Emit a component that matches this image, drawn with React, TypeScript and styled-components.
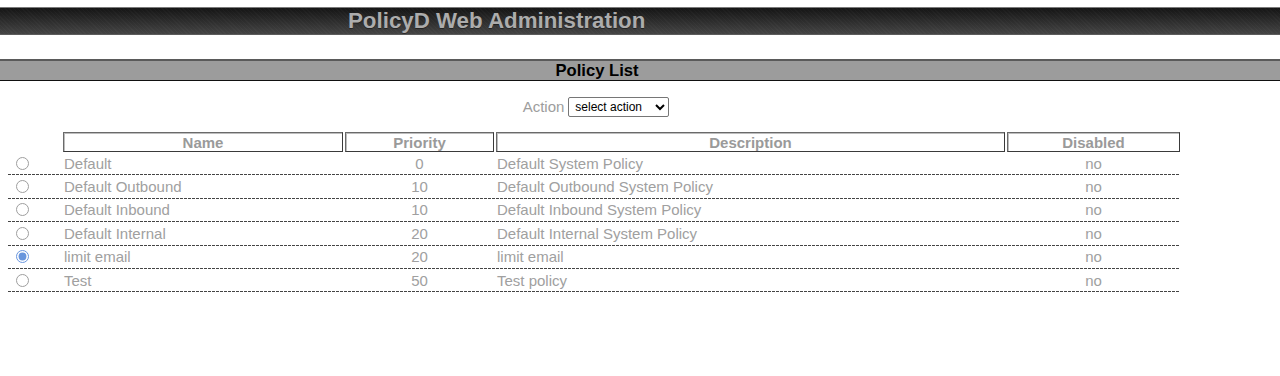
import * as React from "react";
import styled, { createGlobalStyle } from "styled-components";

const GlobalStyle = createGlobalStyle`
  html, body {
    margin: 0;
    padding: 0;
    background: #ffffff;
  }
  body {
    padding-top: 7px;
    font-family: "Liberation Sans", Arial, sans-serif;
    font-size: 15px;
    color: #999;
  }
`;

const TopBar = styled.div`
  height: 26px;
  border-top: 1px solid #7a7a7a;
  border-bottom: 1px solid #5c5c5c;
  background:
    repeating-linear-gradient(45deg, rgba(255, 255, 255, 0.025) 0 1px, transparent 1px 3px),
    linear-gradient(to bottom, #151515 0%, #2a2a2a 45%, #444 100%);
  display: flex;
  align-items: center;
  padding-left: 348px;
`;

const SiteTitle = styled.h1`
  margin: 0;
  font-size: 22.3px;
  font-weight: bold;
  color: #acacac;
  text-shadow: 0 1px 0 rgba(0, 0, 0, 0.4);
`;

const SectionBar = styled.div`
  margin-top: 24px;
  height: 19px;
  border-top: 2px solid #5a5a5a;
  border-bottom: 1px solid #111;
  background: #9c9c9c;
  display: flex;
  align-items: center;
  justify-content: center;
  padding-right: 86px;
`;

const SectionTitle = styled.h2`
  margin: 0;
  font-size: 16.6px;
  font-weight: bold;
  color: #000;
`;

const ActionRow = styled.div`
  display: flex;
  align-items: center;
  justify-content: center;
  gap: 4px;
  padding-right: 88px;
  margin-top: 15px;
  height: 21px;
`;

const ActionLabel = styled.label`
  font-size: 15px;
  color: #9d9d9d;
`;

const ActionSelect = styled.select`
  font-family: "Liberation Sans", Arial, sans-serif;
  font-size: 12px;
  width: 101px;
  height: 20px;
  color: #000;
  border: 1px solid #767676;
  border-radius: 2px;
  background: #fff;
  padding: 0 2px;
`;

const Grid = styled.div`
  margin: 15px 0 0 8px;
  width: 1172px;
`;

const HeaderRow = styled.div`
  display: grid;
  grid-template-columns: 53px 280px 149px 509px 173px;
  column-gap: 2px;
  height: 20px;
`;

const HeadCell = styled.div`
  border: 1px solid #3a3a3a;
  border-top-color: #6a6a6a;
  border-left-color: #6a6a6a;
  box-shadow: inset 1px 1px 0 #bdbdbd;
  display: flex;
  align-items: center;
  justify-content: center;
  font-weight: bold;
  font-size: 15px;
  color: #9a9a9a;
`;

const Spacer = styled.div``;

const BodyRow = styled.div`
  display: grid;
  grid-template-columns: 53px 280px 149px 509px 173px;
  column-gap: 2px;
  height: 22.4px;
  padding-bottom: 1px;
  align-items: center;
  background-image: linear-gradient(to right, #444 3px, transparent 3px);
  background-size: 4px 1px;
  background-repeat: repeat-x;
  background-position: left bottom;
`;

const Cell = styled.div<{ $align?: "left" | "center" }>`
  text-align: ${(p) => p.$align ?? "left"};
  padding-left: ${(p) => (p.$align === "center" ? "0" : "1px")};
  color: #a0a0a0;
  font-size: 15px;
  white-space: nowrap;
`;

const RadioCell = styled.div`
  display: flex;
  align-items: center;
`;

const Radio = styled.input`
  margin: 0 0 0 8px;
  width: 13px;
  height: 13px;
  opacity: 0.7;
  accent-color: #2a6ad0;
`;

const policies = [
  { name: "Default", priority: 0, description: "Default System Policy", disabled: "no" },
  { name: "Default Outbound", priority: 10, description: "Default Outbound System Policy", disabled: "no" },
  { name: "Default Inbound", priority: 10, description: "Default Inbound System Policy", disabled: "no" },
  { name: "Default Internal", priority: 20, description: "Default Internal System Policy", disabled: "no" },
  { name: "limit email", priority: 20, description: "limit email", disabled: "no" },
  { name: "Test", priority: 50, description: "Test policy", disabled: "no" },
];

export default function App() {
  const [selected, setSelected] = React.useState(4);

  return (
    <>
      <GlobalStyle />
      <TopBar>
        <SiteTitle>PolicyD Web Administration</SiteTitle>
      </TopBar>
      <SectionBar>
        <SectionTitle>Policy List</SectionTitle>
      </SectionBar>
      <ActionRow>
        <ActionLabel>Action</ActionLabel>
        <ActionSelect defaultValue="">
          <option value="">select action</option>
          <option value="add">Add</option>
          <option value="change">Change</option>
          <option value="remove">Remove</option>
        </ActionSelect>
      </ActionRow>
      <Grid>
        <HeaderRow>
          <Spacer />
          <HeadCell>Name</HeadCell>
          <HeadCell>Priority</HeadCell>
          <HeadCell>Description</HeadCell>
          <HeadCell>Disabled</HeadCell>
        </HeaderRow>
        {policies.map((p, i) => (
          <BodyRow key={p.name}>
            <RadioCell>
              <Radio
                type="radio"
                name="policy"
                checked={selected === i}
                onChange={() => setSelected(i)}
              />
            </RadioCell>
            <Cell>{p.name}</Cell>
            <Cell $align="center">{p.priority}</Cell>
            <Cell>{p.description}</Cell>
            <Cell $align="center">{p.disabled}</Cell>
          </BodyRow>
        ))}
      </Grid>
    </>
  );
}
